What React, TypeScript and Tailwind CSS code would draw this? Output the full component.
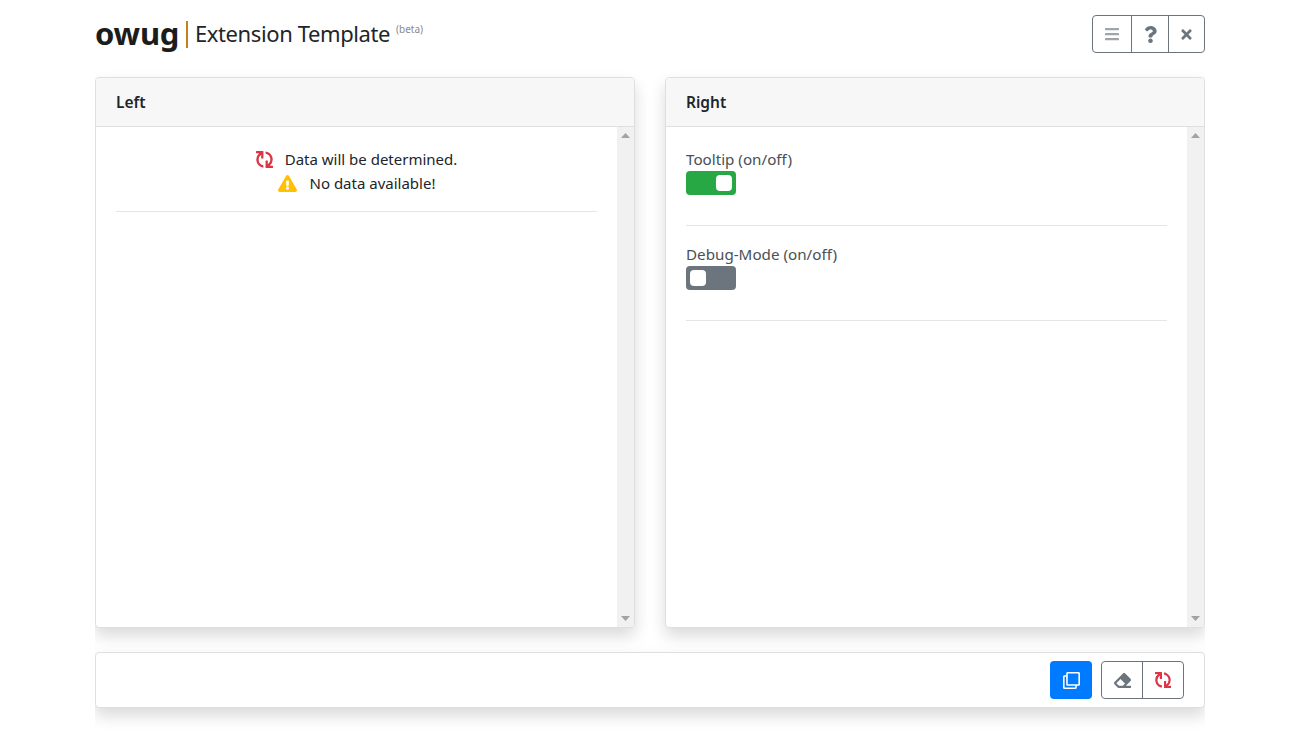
import type { ReactNode } from 'react';
import { FaBars, FaEraser, FaExclamationTriangle, FaQuestion, FaRegClone, FaSync, FaTimes } from 'react-icons/fa';

const Scrollbar = () => {
  return (
    <div className="flex w-[17px] shrink-0 flex-col items-center justify-between bg-[#f1f1f1] py-[6px]">
      <svg width="9" height="5" viewBox="0 0 9 5">
        <path d="M4.5 0 L9 5 L0 5 Z" fill="#a3a3a3" />
      </svg>
      <svg width="9" height="5" viewBox="0 0 9 5">
        <path d="M0 0 L9 0 L4.5 5 Z" fill="#a3a3a3" />
      </svg>
    </div>
  );
};

const Panel = ({ title, children }: { title: string; children: ReactNode }) => {
  return (
    <div className="flex h-[551px] flex-1 flex-col overflow-hidden rounded-[4px] border border-[#dfdfdf] bg-white shadow-[0_8px_16px_rgba(0,0,0,0.15)]">
      <div className="flex h-[49px] shrink-0 items-center border-b border-[#dfdfdf] bg-[#f7f7f7] pt-[2px] pl-5 text-[15.5px] font-semibold text-[#212529]">
        {title}
      </div>
      <div className="flex min-h-0 flex-1">
        <div className="flex-1 pl-5 pr-5">{children}</div>
        <Scrollbar />
      </div>
    </div>
  );
};

const Toggle = ({ label, on, className }: { label: string; on: boolean; className: string }) => {
  return (
    <div className={className}>
      <div className="h-[23px] text-[15.2px] leading-[23px] text-[#495057]">{label}</div>
      <div
        className={
          on
            ? 'flex h-6 w-[50px] items-center justify-end rounded-[4px] bg-[#28a745] px-[4px]'
            : 'flex h-6 w-[50px] items-center justify-start rounded-[4px] bg-[#6c757d] px-[4px]'
        }
      >
        <span className="h-4 w-4 rounded-[4px] bg-white" />
      </div>
    </div>
  );
};

export default function App() {
  return (
    <div
      className="mx-auto h-[745px] w-[1110px] overflow-hidden bg-white text-[#212529]"
      style={{ fontFamily: '"Noto Sans", "Open Sans", sans-serif' }}
    >
      <header className="flex h-[77px] items-start justify-between">
        <div className="mt-[15px] flex items-start">
          <span className="w-[83px] text-[31px] leading-[36px] font-bold tracking-[-0.2px] text-[#1c1c1c]">owug</span>
          <span className="mt-[6px] ml-[8px] h-[27px] w-[2px] bg-[#c77f1a]" />
          <span className="mt-[3px] ml-[7px] text-[22px] leading-[30px] font-normal tracking-[-0.4px]">
            Extension Template
          </span>
          <span className="mt-[7px] ml-[6px] text-[10px] leading-[14px] text-[#8a8a8a]">(beta)</span>
        </div>
        <div className="mt-[15px] flex h-[38px] w-[113px] overflow-hidden rounded-[4px] border border-[#6c757d]">
          <button type="button" className="flex w-[38px] items-center justify-center text-[#a0a5aa]">
            <FaBars size={16} />
          </button>
          <button type="button" className="flex w-[37px] items-center justify-center border-l border-[#6c757d] text-[#6c757d]">
            <FaQuestion size={17} />
          </button>
          <button type="button" className="flex flex-1 items-center justify-center border-l border-[#6c757d] text-[#6c757d]">
            <FaTimes size={15} />
          </button>
        </div>
      </header>

      <div className="flex gap-[30px]">
        <Panel title="Left">
          <div className="border-b border-[#e5e5e5] pt-[20px] pb-[16px] text-[15px] leading-6">
            <div className="flex items-center justify-center">
              <FaSync size={17} className="rotate-90 text-[#dc3545]" />
              <span className="ml-[12px]">Data will be determined.</span>
            </div>
            <div className="flex items-center justify-center">
              <FaExclamationTriangle size={19} className="text-[#ffc107]" />
              <span className="ml-[13px]">No data available!</span>
            </div>
          </div>
        </Panel>
        <Panel title="Right">
          <Toggle label="Tooltip (on/off)" on className="h-[99px] border-b border-[#e5e5e5] pt-[21px]" />
          <Toggle label="Debug-Mode (on/off)" on={false} className="h-[95px] border-b border-[#e5e5e5] pt-[17px]" />
        </Panel>
      </div>

      <div className="mt-[24px] flex h-[56px] items-center justify-end rounded-[4px] border border-[#dfdfdf] bg-white pr-5 shadow-[0_8px_16px_rgba(0,0,0,0.15)]">
        <button type="button" className="flex h-[38px] w-[42px] items-center justify-center rounded-[4px] bg-[#007bff] text-white">
          <FaRegClone size={17} />
        </button>
        <div className="ml-[9px] flex h-[38px] w-[83px] overflow-hidden rounded-[4px] border border-[#6c757d]">
          <button type="button" className="flex w-[40px] items-center justify-center text-[#6c757d]">
            <FaEraser size={17} />
          </button>
          <button type="button" className="flex flex-1 items-center justify-center border-l border-[#6c757d] text-[#dc3545]">
            <FaSync size={16} className="rotate-90" />
          </button>
        </div>
      </div>
    </div>
  );
}
